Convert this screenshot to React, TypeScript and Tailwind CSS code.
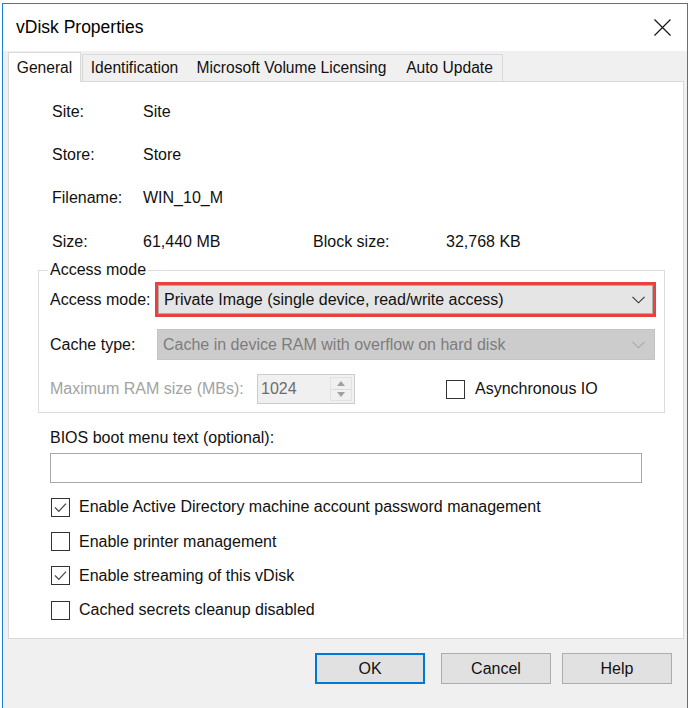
import React from "react";

const font = { fontFamily: '"Liberation Sans", Arial, sans-serif' };

const Chevron = ({ color }: { color: string }) => (
  <svg width="13" height="8" viewBox="0 0 13 8" className="shrink-0">
    <path d="M0.5 0.8 L6.5 6.8 L12.5 0.8" fill="none" stroke={color} strokeWidth="1.1" />
  </svg>
);

const CheckBox = ({ checked }: { checked?: boolean }) => (
  <span className="w-[19px] h-[19px] border border-[#333] bg-white flex items-center justify-center shrink-0">
    {checked && (
      <svg width="15" height="15" viewBox="0 0 15 15">
        <path d="M2 7.5 L5.8 11.3 L13 3.6" fill="none" stroke="#444" strokeWidth="1.2" />
      </svg>
    )}
  </span>
);

const InfoRow = ({ label, value, label2, value2 }: { label: string; value: string; label2?: string; value2?: string }) => (
  <div className="h-[43.3px] flex items-center">
    <span className="w-[91px]">{label}</span>
    <span className="w-[170px]">{value}</span>
    {label2 && <span className="w-[133px]">{label2}</span>}
    {value2 && <span>{value2}</span>}
  </div>
);

const tabs = ["General", "Identification", "Microsoft Volume Licensing", "Auto Update"];
const tabWidths = ["w-[73px]", "w-[105px]", "w-[212px]", "w-[106px]"];

const options = [
  { label: "Enable Active Directory machine account password management", checked: true },
  { label: "Enable printer management", checked: false },
  { label: "Enable streaming of this vDisk", checked: true },
  { label: "Cached secrets cleanup disabled", checked: false },
];

export default function App() {
  return (
    <div className="w-[690px] h-[708px] bg-white pl-[2px] pt-[3px] overflow-hidden text-[16px] text-[#111]" style={font}>
      <div className="w-[686px] h-[705px] border-l border-r border-t border-[#1883d7] bg-[#f0f0f0]">
        {/* title bar */}
        <div className="h-[47px] bg-white flex items-center justify-between pl-[13px] pr-[16px]">
          <span className="text-[17.5px] text-black">vDisk Properties</span>
          <svg width="17" height="17" viewBox="0 0 17 17">
            <path d="M0.5 0.5 L16.5 16.5 M16.5 0.5 L0.5 16.5" stroke="#111" strokeWidth="1.1" />
          </svg>
        </div>

        {/* tabs */}
        <div className="ml-[5px] w-[676px]">
          <div className="h-[31px] flex items-end -mb-px relative z-10 text-[15.6px]">
            {tabs.map((t, i) =>
              i === 0 ? (
                <div key={t} className={`${tabWidths[i]} h-[30px] bg-white border-t border-l border-r border-[#d9d9d9] flex items-center justify-center`}>
                  {t}
                </div>
              ) : (
                <div key={t} className={`${tabWidths[i]} h-[27px] mb-px -ml-px bg-[#f0f0f0] border-t border-r border-[#d9d9d9] flex items-center justify-center ${i === 1 ? "ml-px border-l" : ""}`}>
                  {t}
                </div>
              )
            )}
          </div>

          {/* panel */}
          <div className="h-[558px] bg-white border border-[#d9d9d9]">
            <div className="mt-[8px] pl-[43px]">
              <InfoRow label="Site:" value="Site" />
              <InfoRow label="Store:" value="Store" />
              <InfoRow label="Filename:" value="WIN_10_M" />
              <InfoRow label="Size:" value="61,440 MB" label2="Block size:" value2="32,768 KB" />
            </div>

            {/* access mode group */}
            <div className="relative mt-[7px] ml-[29px] w-[627px] h-[143px] border border-[#dcdcdc] pl-[11px]">
              <span className="absolute left-[9px] -top-[11px] px-[2px] bg-white leading-[20px]">Access mode</span>

              <div className="mt-[14px] h-[29px] flex items-center">
                <span className="w-[107px]">Access mode:</span>
                <div className="w-[495px] h-[29px] ml-px bg-[#e5e5e5] border border-[#adadad] outline-[3px] outline-solid outline-[#e8413e] flex items-center justify-between pl-[5px] pr-[7px]">
                  <span>Private Image (single device, read/write access)</span>
                  <Chevron color="#333" />
                </div>
              </div>

              <div className="mt-[15px] h-[31px] flex items-center">
                <span className="w-[107px]">Cache type:</span>
                <div className="w-[498px] h-[31px] bg-[#cccccc] border border-[#c4c4c4] flex items-center justify-between pl-[5px] pr-[9px] text-[#7d7d7d]">
                  <span>Cache in device RAM with overflow on hard disk</span>
                  <Chevron color="#a8a8a8" />
                </div>
              </div>

              <div className="mt-[14px] h-[30px] flex items-center">
                <span className="w-[207px] text-[#a3a3a3]">Maximum RAM size (MBs):</span>
                <div className="w-[98px] h-[30px] bg-[#f0f0f0] border border-[#cccccc] flex items-center justify-between pl-[3px] pr-[2px]">
                  <span className="text-[#6d6d6d]">1024</span>
                  <div className="w-[22px] h-[24px] flex flex-col border border-[#e2e2e2] bg-[#f0f0f0]">
                    <div className="flex-1 flex items-center justify-center border-b border-[#dcdcdc]">
                      <svg width="8" height="5" viewBox="0 0 8 5"><path d="M0 5 L4 0 L8 5 Z" fill="#a0a0a0" /></svg>
                    </div>
                    <div className="flex-1 flex items-center justify-center">
                      <svg width="8" height="5" viewBox="0 0 8 5"><path d="M0 0 L4 5 L8 0 Z" fill="#a0a0a0" /></svg>
                    </div>
                  </div>
                </div>
                <span className="ml-[91px]"><CheckBox /></span>
                <span className="ml-[10px]">Asynchronous IO</span>
              </div>
            </div>

            {/* bios text */}
            <div className="pl-[41px]">
              <div className="mt-[15px] h-[20px] leading-[20px]">BIOS boot menu text (optional):</div>
              <div className="mt-[5px] w-[592px] h-[30px] border border-[#a8a8a8] bg-white" />
              <div className="mt-[7px] pl-[1px]">
                {options.map((o) => (
                  <div key={o.label} className="h-[34.3px] flex items-center">
                    <CheckBox checked={o.checked} />
                    <span className="ml-[9px]">{o.label}</span>
                  </div>
                ))}
              </div>
            </div>
          </div>
        </div>

        {/* buttons */}
        <div className="mt-[14px] pl-[312px] flex">
          <button className="w-[110px] h-[31px] bg-[#e1e1e1] border-2 border-[#0078d7] text-[#111]">OK</button>
          <button className="ml-[16px] w-[110px] h-[31px] bg-[#e1e1e1] border border-[#adadad] text-[#111]">Cancel</button>
          <button className="ml-[11px] w-[110px] h-[31px] bg-[#e1e1e1] border border-[#adadad] text-[#111]">Help</button>
        </div>
      </div>
    </div>
  );
}
